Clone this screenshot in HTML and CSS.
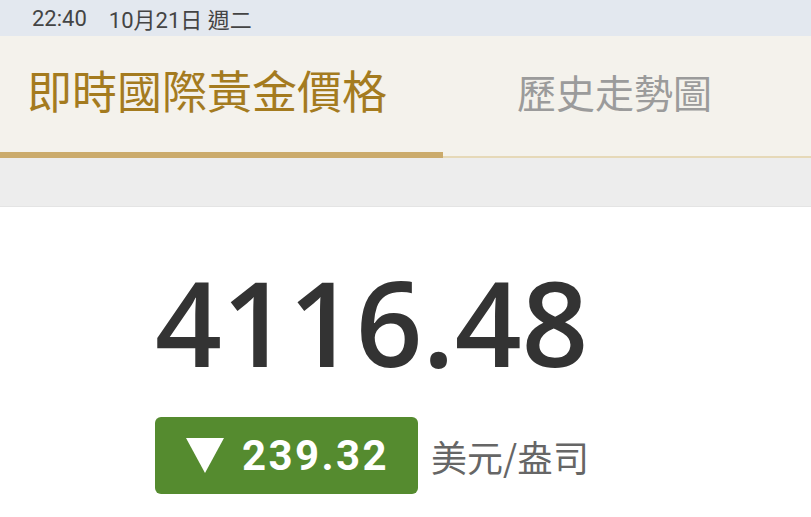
FILE: index.html
```html
<!DOCTYPE html>
<html lang="zh-Hant">
<head>
    <meta charset="UTF-8">
    <meta name="viewport" content="width=device-width, initial-scale=1.0">
    <title>即時國際黃金價格</title>
    <link rel="stylesheet" href="styles.css">
</head>
<body>

<div class="status-bar">
    <span class="clock">22:40</span>
    <span class="date">10月21日 週二</span>
</div>

<div class="tabs">
    <div class="tab active">即時國際黃金價格</div>
    <div class="tab">歷史走勢圖</div>
</div>

<div class="spacer"></div>

<div class="content">
    <div class="price">4116.48</div>
    <div class="change-row">
        <div class="change down">
            <svg class="arrow" width="38" height="35" viewBox="0 0 38 35">
                <polygon points="0,0 38,0 19,35" fill="#fff"/>
            </svg>
            <span class="amount">239.32</span>
        </div>
        <span class="unit">美元/盎司</span>
    </div>
</div>

</body>
</html>
```

FILE: styles.css
```css
body {
    margin: 0;
    font-family: "Noto Sans", "Noto Sans CJK TC", sans-serif;
    background: #fff;
    width: 811px;
    height: 517px;
    overflow: hidden;
}
.status-bar {
    height: 36px;
    background: #e3e8ef;
    color: #444;
    font-size: 22px;
    padding-left: 32px;
    display: flex;
    align-items: center;
    gap: 22px;
    font-family: Roboto, "Noto Sans CJK TC", sans-serif;
}
.tabs {
    display: flex;
    height: 122px;
    background: #f4f2ec;
    border-bottom: 2px solid #e6d9b8;
    box-sizing: border-box;
}
.tab {
    display: flex;
    align-items: center;
    padding-bottom: 10px;
    color: #9b9b9b;
    font-size: 39px;
    font-family: "Noto Sans CJK TC", sans-serif;
    box-sizing: border-box;
}
.tab.active {
    width: 443px;
    padding-left: 27px;
    color: #a47b1f;
    font-size: 45px;
    border-bottom: 6px solid #cbab6c;
    margin-bottom: -2px;
}
.tab + .tab {
    padding-left: 74px;
}
.spacer {
    height: 48px;
    background: #ededed;
    border-bottom: 1px solid #e4e4e4;
}
.content {
    padding-left: 155px;
}
.price {
    font-family: "Open Sans", sans-serif;
    font-weight: 650;
    font-size: 117px;
    color: #333;
    line-height: 1;
    margin-top: 56px;
}
.change-row {
    display: flex;
    align-items: center;
    gap: 13px;
    margin-top: 37px;
}
.change {
    width: 263px;
    height: 77px;
    border-radius: 6px;
    display: flex;
    align-items: center;
    padding-left: 31px;
    box-sizing: border-box;
    gap: 18px;
    color: #fff;
    font-family: Roboto, sans-serif;
    font-weight: 700;
    font-size: 42px;
    letter-spacing: 2.4px;
}
.change.down {
    background: #558b2f;
}
.arrow {
    flex: none;
}
.unit {
    color: #666;
    font-size: 36px;
    font-family: "Noto Sans CJK TC", sans-serif;
}
```
